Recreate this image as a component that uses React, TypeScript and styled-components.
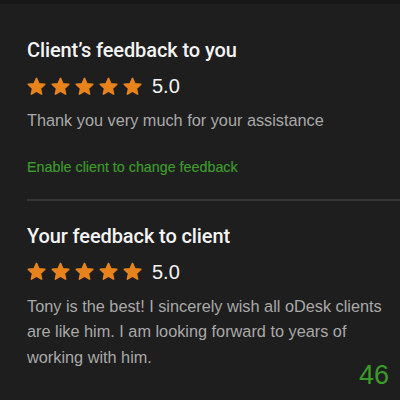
import React from "react";
import styled, { createGlobalStyle } from "styled-components";

const Global = createGlobalStyle`
  html, body { margin: 0; padding: 0; background: #1e1e1e; }
  body { font-family: "Liberation Sans", Arial, sans-serif; }
`;

const Screen = styled.div`
  width: 400px;
  height: 400px;
  background: #1e1e1e;
  border-top: 4px solid #171717;
  box-sizing: border-box;
  position: relative;
  overflow: hidden;
`;

const Section = styled.section<{ $top: number; $bottom: number }>`
  padding: ${(p) => p.$top}px 0 ${(p) => p.$bottom}px 27px;
  display: flex;
  flex-direction: column;
  align-items: flex-start;
`;

const Title = styled.h2`
  margin: 0;
  font-family: Roboto, "Liberation Sans", sans-serif;
  font-size: 20px;
  font-weight: 500;
  color: #f4f4f4;
  line-height: 24px;
  letter-spacing: -0.1px;
`;

const RatingRow = styled.div`
  display: flex;
  align-items: center;
  margin-top: 14px;
`;

const Stars = styled.div`
  display: flex;
  gap: 5px;
`;

const Score = styled.span`
  margin-left: 10px;
  font-size: 20px;
  color: #f4f4f4;
  line-height: 20px;
`;

const Comment = styled.p`
  margin: 12px 0 0;
  max-width: 356px;
  font-size: 16.3px;
  line-height: 25.5px;
  color: #a9a9a9;
`;

const Action = styled.a`
  margin-top: 24px;
  font-size: 14.3px;
  color: #3c9b2c;
  text-decoration: none;
  line-height: 18px;
  -webkit-text-stroke: 0.2px #3c9b2c;
`;

const Divider = styled.hr`
  margin: 0 0 0 27px;
  border: 0;
  border-top: 2px solid #363636;
`;

const PageNumber = styled.span`
  position: absolute;
  right: 11px;
  bottom: 14px;
  font-size: 27px;
  line-height: 22px;
  color: #3a9a2a;
  font-weight: 300;
`;

const Star = () => (
  <svg width="19" height="19" viewBox="0 0 24 24">
    <path
      d="M12 1.8l3.05 6.75 7.35.8-5.5 4.95 1.55 7.3L12 17.9l-6.45 3.7 1.55-7.3-5.5-4.95 7.35-.8z"
      fill="#e8831c"
      stroke="#e8831c"
      strokeWidth="2"
      strokeLinejoin="round"
    />
  </svg>
);

const Rating = ({ value }: { value: string }) => (
  <RatingRow>
    <Stars>
      {[0, 1, 2, 3, 4].map((i) => (
        <Star key={i} />
      ))}
    </Stars>
    <Score>{value}</Score>
  </RatingRow>
);

export default function App() {
  return (
    <>
      <Global />
      <Screen>
        <Section $top={34} $bottom={23}>
          <Title>Client’s feedback to you</Title>
          <Rating value="5.0" />
          <Comment>Thank you very much for your assistance</Comment>
          <Action href="#">Enable client to change feedback</Action>
        </Section>
        <Divider />
        <Section $top={23} $bottom={0}>
          <Title>Your feedback to client</Title>
          <Rating value="5.0" />
          <Comment>
            Tony is the best! I sincerely wish all oDesk clients are like him. I am
            looking forward to years of working with him.
          </Comment>
        </Section>
        <PageNumber>46</PageNumber>
      </Screen>
    </>
  );
}
